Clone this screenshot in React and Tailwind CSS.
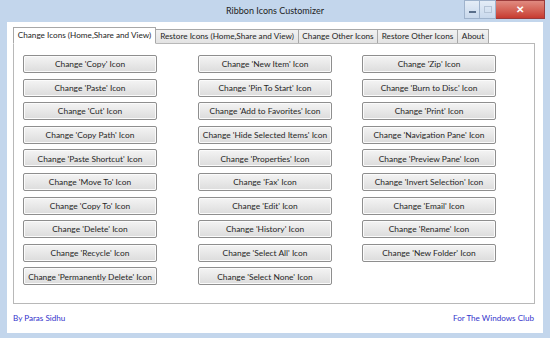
import { useState } from 'react'

const columnas = [
    ['Copy', 'Paste', 'Cut', 'Copy Path', 'Paste Shortcut', 'Move To', 'Copy To', 'Delete', 'Recycle', 'Permanently Delete'],
    ['New Item', 'Pin To Start', 'Add to Favorites', 'Hide Selected Items', 'Properties', 'Fax', 'Edit', 'History', 'Select All', 'Select None'],
    ['Zip', 'Burn to Disc', 'Print', 'Navigation Pane', 'Preview Pane', 'Invert Selection', 'Email', 'Rename', 'New Folder'],
]

const pestanas = [
    { nombre: 'Change Icons (Home,Share and View)', ancho: 'w-[143px]' },
    { nombre: 'Restore Icons (Home,Share and View)', ancho: 'w-[144px]' },
    { nombre: 'Change Other Icons', ancho: 'w-[80px]' },
    { nombre: 'Restore Other Icons', ancho: 'w-[81px]' },
    { nombre: 'About', ancho: 'w-[32px]' },
]

const margenes = ['ml-[9px]', 'ml-[41px]', 'ml-[30px]']

function Boton({ texto }) {
    return (
        <button className="h-[18px] w-[134px] whitespace-nowrap rounded-[2px] border border-[#8e8e8e] bg-gradient-to-b from-[#f4f4f4] to-[#dcdcdc] pt-[1px] text-[8.4px] leading-none text-[#262626] shadow-[inset_0_0_0_1px_#fbfbfb]">
            {texto}
        </button>
    )
}

function App() {
    const [activa, setActiva] = useState(0)

    return (
        <div className="flex h-[338px] w-[550px] flex-col bg-[#c3d6ec] px-[7px] pb-[5px] font-['Lato',sans-serif] text-[#1e1e1e]">
            {/* Barra de título */}
            <div className="relative flex h-[22px] items-center justify-center">
                <span className="pb-[1px] text-[9px]">Ribbon Icons Customizer</span>
                <div className="absolute -right-[2px] top-0 flex h-[19px]">
                    <div className="flex w-[16px] items-end justify-center border border-[#9fb3cc] bg-gradient-to-b from-[#e4edf7] to-[#c9d9ec] pb-[5px]">
                        <div className="h-[2px] w-[7px] bg-[#5a6f8a]" />
                    </div>
                    <div className="flex w-[16px] items-center justify-center border border-l-0 border-[#9fb3cc] bg-gradient-to-b from-[#e4edf7] to-[#c9d9ec]">
                        <div className="h-[7px] w-[8px] border border-[#b5c4d6]" />
                    </div>
                    <div className="flex w-[49px] items-center justify-center border border-l-0 border-[#9b3b3b] bg-gradient-to-b from-[#e08a80] to-[#c73a30] text-[10px] font-bold text-white">
                        ✕
                    </div>
                </div>
            </div>

            {/* Área de cliente */}
            <div className="flex flex-1 flex-col bg-white px-[6px] pt-[5px]">
                <div className="flex h-[16px] items-end">
                    {pestanas.map((p, i) => (
                        <div
                            key={p.nombre}
                            onClick={() => setActiva(i)}
                            className={`${p.ancho} flex cursor-default items-center justify-center whitespace-nowrap border border-[#a8a8a8] text-[8.2px] ${i === activa ? 'relative z-10 -mb-px h-[17px] border-b-white bg-white' : '-ml-px h-[14px] border-b-0 bg-gradient-to-b from-[#f2f2f2] to-[#e3e3e3] first:ml-0'}`}
                        >
                            {p.nombre}
                        </div>
                    ))}
                </div>

                <div className="flex h-[261px] w-[522px] border border-[#b8b8b8] bg-white pt-[11px]">
                    {columnas.map((col, i) => (
                        <div key={i} className={`${margenes[i]} flex flex-col gap-[5.6px]`}>
                            {col.map(nombre => (
                                <Boton key={nombre} texto={`Change '${nombre}' Icon`} />
                            ))}
                        </div>
                    ))}
                </div>

                <div className="flex flex-1 items-center justify-between pb-[1px] pr-[3px] text-[8.1px] text-[#3434cc]">
                    <span>By Paras Sidhu</span>
                    <span>For The Windows Club</span>
                </div>
            </div>
        </div>
    )
}

export default App
